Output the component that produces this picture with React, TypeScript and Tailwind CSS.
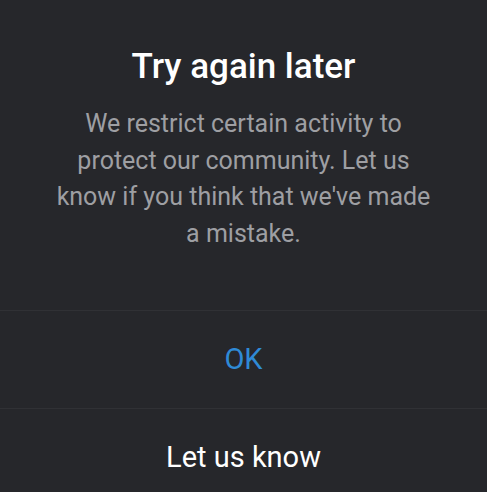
import React from "react";

const RestrictDialog = () => {
  return (
    <div className="min-h-screen bg-[#26272b] font-['Roboto',sans-serif] text-center">
      <div className="h-[310px] pt-[45px] px-[53px]">
        <div className="text-[35px] leading-[44px] font-medium text-white">
          Try again later
        </div>
        <div className="mt-[17px] text-[25px] leading-[36.7px] text-[#9e9fa3]">
          We restrict certain activity to protect our community. Let us know if
          you think that we've made a mistake.
        </div>
      </div>
      <div className="border-t border-[#303135] h-[98px] flex items-center justify-center text-[29px] text-[#2f8ad6]">
        OK
      </div>
      <div className="border-t border-[#303135] h-[98px] flex items-center justify-center text-[29px] text-white">
        Let us know
      </div>
    </div>
  );
};

export default function App() {
  return <RestrictDialog />;
}
